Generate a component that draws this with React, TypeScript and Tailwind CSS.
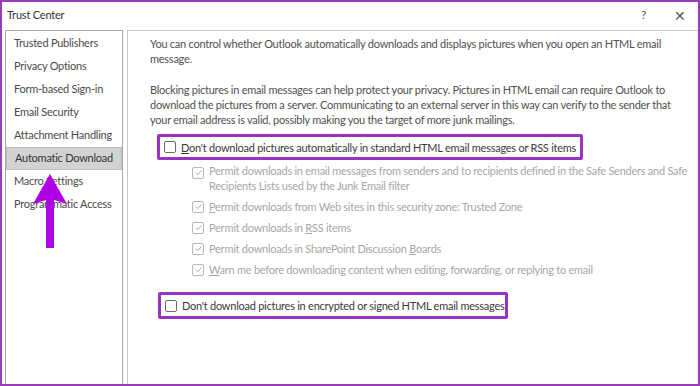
import React from "react";

const font = { fontFamily: 'Lato, "Noto Sans", sans-serif' };

function Box({ checked, disabled }: { checked?: boolean; disabled?: boolean }) {
  return (
    <span
      className={`inline-flex items-center justify-center w-[12px] h-[12px] rounded-[2px] border shrink-0 ${
        disabled ? "border-[#b8b8b8]" : "border-[#6a6a6a]"
      } bg-white`}
    >
      {checked && (
        <svg width="9" height="9" viewBox="0 0 10 10">
          <path d="M2 5.2 L4.2 7.4 L8.2 2.8" fill="none" stroke={disabled ? "#a8a8a8" : "#333"} strokeWidth="1.1" />
        </svg>
      )}
    </span>
  );
}

const items = [
  "Trusted Publishers",
  "Privacy Options",
  "Form-based Sign-in",
  "Email Security",
  "Attachment Handling",
  "Automatic Download",
  "Macro Settings",
  "Programmatic Access",
];

export default function App() {
  return (
    <div
      className="relative w-[700px] h-[386px] bg-white border-2 border-[#9a3cba] overflow-hidden text-[#444] flex flex-col"
      style={font}
    >
      <div className="h-[26px] flex items-center justify-between pl-[5px] pr-[12px] text-[11px] tracking-[-0.2px] text-[#333] shrink-0">
        <span>Trust Center</span>
        <div className="flex items-center gap-[28px] text-[#555]">
          <span className="text-[12px]">?</span>
          <span className="text-[14px]">✕</span>
        </div>
      </div>
      <div className="flex flex-1 pt-[2px] pl-[3px] gap-[4px] min-h-0">
        <div className="w-[118px] border border-[#a8a8a8] border-b-0 pt-[1px] text-[11px] tracking-[-0.25px] text-[#4a4a4a]">
          {items.map((t, i) => (
            <div
              key={t}
              className={`h-[23px] flex items-center pl-[8px] whitespace-nowrap ${
                i === 5 ? "bg-[#d3d3d3] border border-[#bdbdbd] text-[#333]" : ""
              }`}
            >
              {t}
            </div>
          ))}
        </div>
        <div className="flex-1 border border-[#c8c8c8] border-b-0 border-r-0 pl-[22px] pr-[10px] pt-[5px] text-[11px] tracking-[-0.25px] leading-[15px] text-[#505050] whitespace-nowrap">
          <p>
            You can control whether Outlook automatically downloads and displays pictures when you open an HTML email
            <br />
            message.
          </p>
          <p className="mt-[16px]">
            Blocking pictures in email messages can help protect your privacy. Pictures in HTML email can require Outlook to
            <br />
            download the pictures from a server. Communicating to an external server in this way can verify to the sender that
            <br />
            your email address is valid, possibly making you the target of more junk mailings.
          </p>
          <div className="mt-[7px] ml-[7px] w-[426px] h-[26px] border-[3px] border-[#9a33c0] rounded-[2px] flex items-center pl-[4px] gap-[5px] text-[#3a3a3a]">
            <Box />
            <span>
              <span className="underline">D</span>on't download pictures automatically in standard HTML email messages or RSS items
            </span>
          </div>
          <div className="ml-[42px] mt-[3px] text-[#a6a6a6] flex flex-col gap-[6px]">
            <div className="flex gap-[5px]">
              <span className="mt-[2px]">
                <Box checked disabled />
              </span>
              <span>
                Permit downloads in email messages from senders and to recipients defined in the Safe Senders and Safe
                <br />
                Recipients Lists used by the Junk Email filter
              </span>
            </div>
            <div className="flex gap-[5px] items-center">
              <Box checked disabled />
              <span>
                <span className="underline">P</span>ermit downloads from Web sites in this security zone: Trusted Zone
              </span>
            </div>
            <div className="flex gap-[5px] items-center">
              <Box checked disabled />
              <span>
                Permit downloads in <span className="underline">R</span>SS items
              </span>
            </div>
            <div className="flex gap-[5px] items-center">
              <Box checked disabled />
              <span>
                Permit downloads in SharePoint Discussion <span className="underline">B</span>oards
              </span>
            </div>
            <div className="flex gap-[5px] items-center">
              <Box checked disabled />
              <span>
                <span className="underline">W</span>arn me before downloading content when editing, forwarding, or replying to email
              </span>
            </div>
          </div>
          <div className="mt-[15px] ml-[8px] w-[350px] h-[27px] border-[3px] border-[#9a33c0] rounded-[2px] flex items-center pl-[4px] gap-[5px] text-[#3a3a3a]">
            <Box />
            <span>Don't download pictures in encrypted or signed HTML email messages</span>
          </div>
        </div>
      </div>
      <svg className="absolute left-[29px] top-[170px]" width="38" height="80" viewBox="0 0 38 80">
        <path d="M19 2 L36 32 L23 28 L23 76 L15 76 L15 28 L2 32 Z" fill="#b000e6" />
      </svg>
    </div>
  );
}
